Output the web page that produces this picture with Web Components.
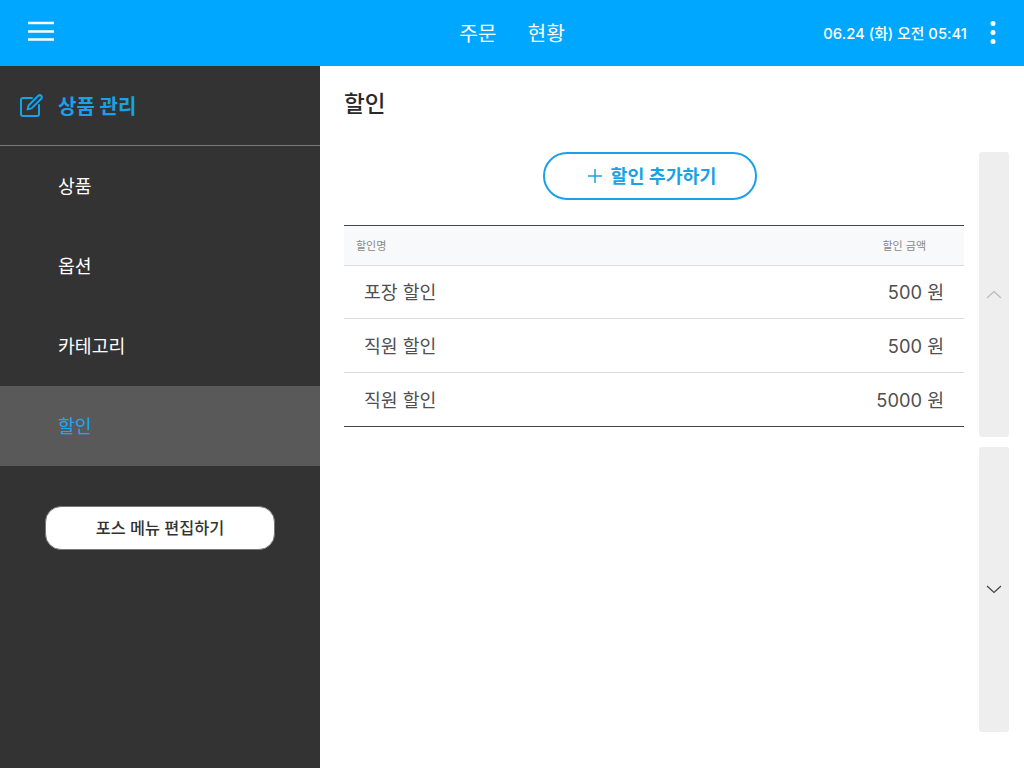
<!DOCTYPE html>
<html lang="ko">
<head>
<meta charset="utf-8">
<title>할인</title>
<style>
    html, body { margin: 0; height: 100%; }
    body { font-family: Inter, "Noto Sans CJK KR", sans-serif; background: #fff; }
    pos-app { height: 768px; }
</style>
</head>
<body>
<pos-app>
    <pos-header slot="header"></pos-header>
    <pos-sidebar slot="sidebar"></pos-sidebar>
    <discount-page slot="main"></discount-page>
</pos-app>

<script>
class PosApp extends HTMLElement {
    constructor() {
        super();
        this.attachShadow({ mode: 'open' });
        this.shadowRoot.innerHTML = `
            <style>
                :host { display: grid; grid-template-rows: 66px 1fr; grid-template-columns: 320px 1fr; overflow: hidden; }
                ::slotted([slot=header]) { grid-column: 1 / 3; }
            </style>
            <slot name="header"></slot>
            <slot name="sidebar"></slot>
            <slot name="main"></slot>
        `;
    }
}

class PosHeader extends HTMLElement {
    constructor() {
        super();
        this.attachShadow({ mode: 'open' });
        this.shadowRoot.innerHTML = `
            <style>
                :host { display: grid; grid-template-columns: 1fr auto 1fr; align-items: center; background: #00a7ff; color: #fff; height: 66px; }
                .menu { margin: 0 0 5px 28px; display: block; }
                nav { display: flex; gap: 31px; font-size: 20.3px; line-height: 68px; height: 66px; }
                .right { display: flex; justify-content: flex-end; align-items: center; }
                .time { font-size: 14.8px; font-weight: 500; padding-bottom: 2px; }
                .more { margin: 0 27px 0 22px; display: block; }
            </style>
            <svg class="menu" width="26" height="20" viewBox="0 0 26 20">
                <path d="M0 2h26M0 10.5h26M0 18.5h26" stroke="#fff" stroke-width="2.3" fill="none"/>
            </svg>
            <nav><span>주문</span><span>현황</span></nav>
            <div class="right">
                <span class="time">06.24 (화) 오전 05:41</span>
                <svg class="more" width="8" height="26" viewBox="0 0 8 26">
                    <circle cx="4" cy="3.5" r="2.5" fill="#fff"/>
                    <circle cx="4" cy="12.5" r="2.5" fill="#fff"/>
                    <circle cx="4" cy="21.5" r="2.5" fill="#fff"/>
                </svg>
            </div>
        `;
    }
}

class SideItem extends HTMLElement {
    constructor() {
        super();
        this.attachShadow({ mode: 'open' });
        this.shadowRoot.innerHTML = `
            <style>
                :host { display: flex; align-items: center; box-sizing: border-box; height: 80px; padding: 0 0 3px 58px; font-size: 18.3px; color: #fff; }
                :host([active]) { background: #595959; color: #1aa9f5; }
            </style>
            <slot></slot>
        `;
    }
}

class PosSidebar extends HTMLElement {
    constructor() {
        super();
        this.attachShadow({ mode: 'open' });
        this.shadowRoot.innerHTML = `
            <style>
                :host { display: flex; flex-direction: column; background: #333; }
                .head { display: flex; align-items: center; gap: 15px; height: 79px; padding-left: 20px; border-bottom: 1px solid #7a7a7a; color: #1aa2e8; font-size: 20px; font-weight: 700; }
                .head svg { display: block; }
                button { display: block; box-sizing: border-box; align-self: flex-start; margin: 40px 0 0 45px; width: 230px; height: 44px; background: #fff; border: 1px solid #777; border-radius: 16px; font: 500 16.3px Inter, "Noto Sans CJK KR", sans-serif; color: #333; padding: 0 0 2px; }
            </style>
            <div class="head">
                <svg width="23" height="23" viewBox="0 0 23 23" fill="none" stroke="#1aa2e8" stroke-width="2" stroke-linejoin="round" stroke-linecap="round">
                    <path d="M12 4H3a2 2 0 0 0-2 2v14a2 2 0 0 0 2 2h14a2 2 0 0 0 2-2v-9"/>
                    <path d="M18.3 1.8a2 2 0 0 1 2.9 2.9L11.5 14.4l-3.9 1 1-3.9z"/>
                </svg>
                <span>상품 관리</span>
            </div>
            <side-item>상품</side-item>
            <side-item>옵션</side-item>
            <side-item>카테고리</side-item>
            <side-item active>할인</side-item>
            <button>포스 메뉴 편집하기</button>
        `;
    }
}

class DiscountRow extends HTMLElement {
    constructor() {
        super();
        this.attachShadow({ mode: 'open' });
        this.shadowRoot.innerHTML = `
            <style>
                :host { display: flex; justify-content: space-between; align-items: center; box-sizing: border-box; height: 54px; padding: 0 20px 1px; border-bottom: 1px solid #dcdcdc; font-size: 18.3px; color: #4f4f4f; }
                :host(:nth-child(2)) { height: 53px; padding-bottom: 3px; }
                :host(:last-child) { border-bottom-color: #444; }
            </style>
            <span>${this.getAttribute('name')}</span>
            <span>${this.getAttribute('price')} 원</span>
        `;
    }
}

class ScrollButton extends HTMLElement {
    constructor() {
        super();
        this.attachShadow({ mode: 'open' });
        const up = this.getAttribute('dir') === 'up';
        this.shadowRoot.innerHTML = `
            <style>
                :host { display: flex; align-items: center; justify-content: center; width: 30px; height: 285px; background: #eee; border-radius: 3px; }
                svg { display: block; }
            </style>
            <svg width="16" height="9" viewBox="0 0 16 9" fill="none" stroke="${up ? '#bbb' : '#444'}" stroke-width="1.2">
                <path d="${up ? 'M1 8l7-6.5 7 6.5' : 'M1 1l7 6.5 7-6.5'}"/>
            </svg>
        `;
    }
}

class DiscountPage extends HTMLElement {
    constructor() {
        super();
        this.attachShadow({ mode: 'open' });
        this.shadowRoot.innerHTML = `
            <style>
                :host { display: flex; flex-direction: column; padding: 0 15px 0 24px; background: #fff; }
                h1 { margin: 0; height: 86px; line-height: 76px; font-size: 22.5px; font-weight: 500; color: #292929; }
                .body { display: flex; gap: 15px; }
                .list { width: 620px; }
                .add-wrap { display: flex; justify-content: center; padding-right: 8px; }
                .add { display: flex; align-items: center; justify-content: center; gap: 9px; box-sizing: border-box; width: 214px; height: 48px; background: #fff; border: 2px solid #1aa2e8; border-radius: 24px; color: #1aa2e8; font: 700 18.4px Inter, "Noto Sans CJK KR", sans-serif; padding: 0 0 2px 4px; }
                .add svg { display: block; margin-top: 2px; }
                .table { margin-top: 25px; border-top: 1px solid #444; }
                .thead { display: flex; justify-content: space-between; align-items: center; box-sizing: border-box; height: 40px; padding: 0 38px 2px 12px; background: #f8f9fa; border-bottom: 1px solid #dcdcdc; font-size: 11px; color: #888; }
                .scroll { display: flex; flex-direction: column; gap: 10px; }
            </style>
            <h1>할인</h1>
            <div class="body">
                <div class="list">
                    <div class="add-wrap">
                        <button class="add">
                            <svg width="14" height="14" viewBox="0 0 14 14"><path d="M7 0v14M0 7h14" stroke="#1aa2e8" stroke-width="1.5"/></svg>
                            <span>할인 추가하기</span>
                        </button>
                    </div>
                    <div class="table">
                        <div class="thead"><span>할인명</span><span>할인 금액</span></div>
                        <discount-row name="포장 할인" price="500"></discount-row>
                        <discount-row name="직원 할인" price="500"></discount-row>
                        <discount-row name="직원 할인" price="5000"></discount-row>
                    </div>
                </div>
                <div class="scroll">
                    <scroll-button dir="up"></scroll-button>
                    <scroll-button dir="down"></scroll-button>
                </div>
            </div>
        `;
    }
}

customElements.define('pos-app', PosApp);
customElements.define('pos-header', PosHeader);
customElements.define('side-item', SideItem);
customElements.define('pos-sidebar', PosSidebar);
customElements.define('discount-row', DiscountRow);
customElements.define('scroll-button', ScrollButton);
customElements.define('discount-page', DiscountPage);
</script>
</body>
</html>
